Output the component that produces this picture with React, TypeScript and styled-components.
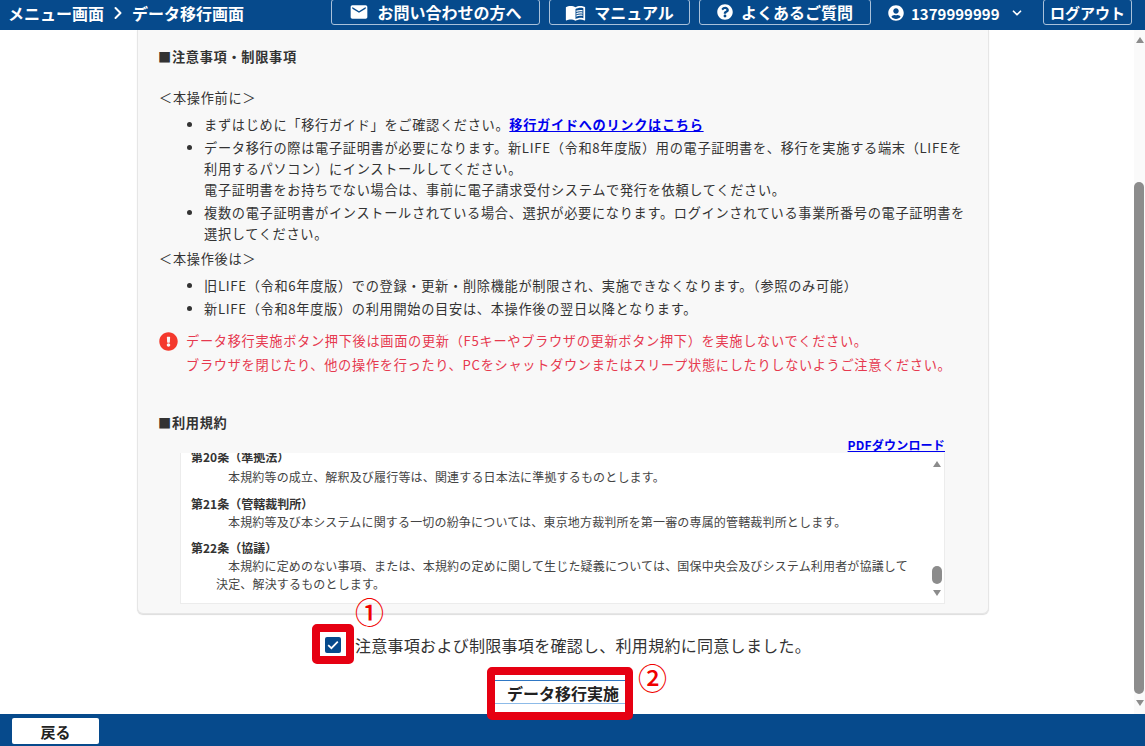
import React from "react";
import styled, { createGlobalStyle } from "styled-components";
import { MdEmail, MdMenuBook } from "react-icons/md";
import { FaQuestionCircle, FaUserCircle, FaExclamationCircle } from "react-icons/fa";
import { FiChevronDown, FiChevronRight } from "react-icons/fi";

const Global = createGlobalStyle`
  html, body { margin: 0; padding: 0; height: 100%; overflow: hidden; background: #fff; }
  #root { height: 100%; }
  body { font-family: "Noto Sans CJK JP", "Noto Sans", sans-serif; color: #333; }
`;

const Page = styled.div`
  height: 746px;
  display: flex;
  flex-direction: column;
`;

const Header = styled.header`
  height: 30px;
  flex: none;
  background: #064a8c;
  color: #fff;
  display: flex;
  align-items: flex-start;
  padding: 0 13px 0 8px;
  box-sizing: border-box;
`;

const Crumbs = styled.div`
  flex: 1;
  display: flex;
  align-items: center;
  gap: 4px;
  height: 26px;
  font-size: 16px;
  font-weight: 700;
  line-height: 26px;
`;

const HeaderButton = styled.a<{ $w: number; $mr: number; $fs: number }>`
  box-sizing: border-box;
  width: ${(p) => p.$w}px;
  margin-right: ${(p) => p.$mr}px;
  height: 26px;
  margin-top: -1px;
  border: 1px solid #a9c1da;
  border-radius: 3px;
  display: flex;
  align-items: center;
  justify-content: center;
  gap: 8px;
  font-size: ${(p) => p.$fs}px;
  font-weight: 700;
  color: #fff;
  svg { flex: none; }
`;

const UserMenu = styled.div`
  width: 136px;
  margin-right: 19px;
  height: 26px;
  display: flex;
  align-items: center;
  gap: 7px;
  font-size: 15px;
  font-weight: 700;
  svg:last-child { margin-left: 3px; }
`;

const Main = styled.main`
  flex: 1;
  min-height: 0;
  display: flex;
`;

const Content = styled.div`
  flex: 1;
  min-width: 0;
  padding: 0 145px 0 137px;
`;

const Panel = styled.section`
  box-sizing: border-box;
  height: 584px;
  background: #f8f8f8;
  border: 1px solid #e6e6e6;
  border-top: 0;
  border-radius: 0 0 6px 6px;
  box-shadow: 0 1px 1px #ddd;
  padding: 16px 0 0 21px;
  font-size: 13.2px;
  line-height: 21px;
  letter-spacing: 0.69px;
  color: #333;
`;

const Heading = styled.h2`
  margin: 0 0 0 -1px;
  font-size: 13.2px;
  line-height: 21px;
  font-weight: 700;
  color: #333;
`;

const Lead = styled.p<{ $top: number }>`
  margin: ${(p) => p.$top}px 0 0;
`;

const List = styled.ul`
  margin: 6px 0 0;
  padding: 0 0 0 45px;
`;

const Item = styled.li`
  margin-bottom: 2px;
  white-space: nowrap;
`;

const InlineLink = styled.a`
  color: #0000ee;
  font-weight: 700;
  text-decoration: underline;
`;

const Alert = styled.div`
  margin-top: 10px;
  display: flex;
  align-items: flex-start;
  gap: 8px;
  color: #e6394f;
  line-height: 24px;
  svg { flex: none; margin-top: 3px; color: #f4392d; }
`;

const TermsHeading = styled(Heading)`
  margin-top: 35px;
`;

const DownloadRow = styled.div`
  display: flex;
  justify-content: flex-end;
  padding-right: 43px;
  height: 19px;
  margin-top: 1px;
  line-height: 21px;
`;

const DownloadLink = styled.a`
  color: #0000ee;
  font-size: 12px;
  font-weight: 700;
  text-decoration: underline;
  letter-spacing: 0.2px;
`;

const TermsBox = styled.div`
  margin-left: 21px;
  width: 765px;
  height: 151px;
  box-sizing: border-box;
  background: #fff;
  border: 1px solid #ececec;
  border-top: 0;
  display: flex;
  overflow: hidden;
  letter-spacing: 0;
`;

const TermsBody = styled.div`
  flex: 1;
  min-width: 0;
  overflow: hidden;
  padding: 0 0 0 10px;
  font-size: 12px;
  line-height: 18px;
  color: #444;
`;

const ClauseTitle = styled.div`
  font-weight: 700;
  line-height: 19px;
  color: #333;
`;

const Clause = styled.div`
  margin-bottom: 7.5px;
  &:first-child { margin-top: -6px; }
  &:first-child ${ClauseTitle} { margin-bottom: 2px; }
`;

const ClauseText = styled.div`
  margin-left: 25px;
  padding-right: 10px;
  text-indent: 12px;
  letter-spacing: 0.17px;
`;

const ScrollTrack = styled.div<{ $w: number; $bg: string; $pad: number; $padBottom: number }>`
  flex: none;
  width: ${(p) => p.$w}px;
  background: ${(p) => p.$bg};
  box-sizing: border-box;
  padding: ${(p) => p.$pad}px 0 ${(p) => p.$padBottom}px;
  display: flex;
  flex-direction: column;
  align-items: flex-end;
`;

const ArrowUp = styled.div<{ $right: number }>`
  flex: none;
  width: 0;
  height: 0;
  margin-right: ${(p) => p.$right}px;
  border-left: 4px solid transparent;
  border-right: 4px solid transparent;
  border-bottom: 6px solid #8c8c8c;
`;

const ArrowDown = styled.div<{ $right: number }>`
  flex: none;
  width: 0;
  height: 0;
  margin-right: ${(p) => p.$right}px;
  border-left: 4px solid transparent;
  border-right: 4px solid transparent;
  border-top: 6px solid #8c8c8c;
`;

const Thumb = styled.div<{ $h: number; $top: number; $right: number; $w: number; $bottom: number }>`
  flex: none;
  width: ${(p) => p.$w}px;
  height: ${(p) => p.$h}px;
  margin: ${(p) => p.$top}px ${(p) => p.$right}px ${(p) => p.$bottom}px 0;
  background: #8c8c8c;
  border-radius: 5px;
`;

const AgreeRow = styled.div`
  display: flex;
  justify-content: center;
  align-items: center;
  gap: 14px;
  margin-top: 19px;
  height: 24px;
  padding-left: 10px;
  font-size: 16px;
  letter-spacing: 0.29px;
  color: #333;
`;

const CheckWrap = styled.span`
  position: relative;
  width: 16px;
  height: 16px;
  flex: none;
  background: #064a8c;
  border-radius: 2px;
  display: flex;
  align-items: center;
  justify-content: center;
`;

const RedFrame = styled.span<{ $t: number; $r: number; $b: number; $l: number; $bw: number }>`
  position: absolute;
  top: ${(p) => p.$t}px;
  right: ${(p) => p.$r}px;
  bottom: ${(p) => p.$b}px;
  left: ${(p) => p.$l}px;
  border: ${(p) => p.$bw}px solid #e60012;
  border-radius: 5px;
  pointer-events: none;
`;

const Circled = styled.span<{ $t: number; $l: number }>`
  position: absolute;
  top: ${(p) => p.$t}px;
  left: ${(p) => p.$l}px;
  color: #f00000;
  font-size: 29px;
  line-height: 30px;
  font-weight: 500;
  letter-spacing: 0;
  font-family: "Noto Sans CJK JP", sans-serif;
`;

const ActionRow = styled.div`
  display: flex;
  justify-content: center;
  margin-top: 23px;
`;

const ActionButton = styled.button`
  position: relative;
  width: 138px;
  height: 24px;
  box-sizing: border-box;
  padding: 0;
  background: #fff;
  border: 0;
  border-top: 1px solid #2f77c4;
  border-bottom: 1px solid #8dbbe8;
  font-family: inherit;
  font-size: 16px;
  line-height: 24px;
  font-weight: 700;
  color: #222;
`;

const Footer = styled.footer`
  height: 32px;
  flex: none;
  background: #064a8c;
  padding: 4px 0 0 12px;
  box-sizing: border-box;
`;

const BackButton = styled.button`
  width: 87px;
  height: 26px;
  padding: 0;
  border: 0;
  border-radius: 2px;
  background: #fff;
  font-family: inherit;
  font-size: 15px;
  font-weight: 700;
  color: #222;
`;

export default function App() {
  return (
    <Page>
      <Global />
      <Header>
        <Crumbs>
          <span>メニュー画面</span>
          <FiChevronRight size={20} strokeWidth={2.4} />
          <span>データ移行画面</span>
        </Crumbs>
        <HeaderButton $w={209} $mr={9} $fs={16}><MdEmail size={20} />お問い合わせの方へ</HeaderButton>
        <HeaderButton $w={141} $mr={9} $fs={16}><MdMenuBook size={21} />マニュアル</HeaderButton>
        <HeaderButton $w={172} $mr={17} $fs={16}><FaQuestionCircle size={16} />よくあるご質問</HeaderButton>
        <UserMenu><FaUserCircle size={16} />1379999999<FiChevronDown size={14} strokeWidth={3} /></UserMenu>
        <HeaderButton $w={89} $mr={0} $fs={15}>ログアウト</HeaderButton>
      </Header>
      <Main>
        <Content>
          <Panel>
            <Heading>■注意事項・制限事項</Heading>
            <Lead $top={20}>＜本操作前に＞</Lead>
            <List>
              <Item>まずはじめに「移行ガイド」をご確認ください。<InlineLink href="#">移行ガイドへのリンクはこちら</InlineLink></Item>
              <Item>データ移行の際は電子証明書が必要になります。新LIFE（令和8年度版）用の電子証明書を、移行を実施する端末（LIFEを<br />利用するパソコン）にインストールしてください。<br />電子証明書をお持ちでない場合は、事前に電子請求受付システムで発行を依頼してください。</Item>
              <Item>複数の電子証明書がインストールされている場合、選択が必要になります。ログインされている事業所番号の電子証明書を<br />選択してください。</Item>
            </List>
            <Lead $top={4}>＜本操作後は＞</Lead>
            <List>
              <Item>旧LIFE（令和6年度版）での登録・更新・削除機能が制限され、実施できなくなります。（参照のみ可能）</Item>
              <Item>新LIFE（令和8年度版）の利用開始の目安は、本操作後の翌日以降となります。</Item>
            </List>
            <Alert>
              <FaExclamationCircle size={19} />
              <div>
                データ移行実施ボタン押下後は画面の更新（F5キーやブラウザの更新ボタン押下）を実施しないでください。<br />
                ブラウザを閉じたり、他の操作を行ったり、PCをシャットダウンまたはスリープ状態にしたりしないようご注意ください。
              </div>
            </Alert>
            <TermsHeading>■利用規約</TermsHeading>
            <DownloadRow><DownloadLink href="#">PDFダウンロード</DownloadLink></DownloadRow>
            <TermsBox>
              <TermsBody>
                <Clause>
                  <ClauseTitle>第20条（準拠法）</ClauseTitle>
                  <ClauseText>本規約等の成立、解釈及び履行等は、関連する日本法に準拠するものとします。</ClauseText>
                </Clause>
                <Clause>
                  <ClauseTitle>第21条（管轄裁判所）</ClauseTitle>
                  <ClauseText>本規約等及び本システムに関する一切の紛争については、東京地方裁判所を第一審の専属的管轄裁判所とします。</ClauseText>
                </Clause>
                <Clause>
                  <ClauseTitle>第22条（協議）</ClauseTitle>
                  <ClauseText>本規約に定めのない事項、または、本規約の定めに関して生じた疑義については、国保中央会及びシステム利用者が協議して決定、解決するものとします。</ClauseText>
                </Clause>
              </TermsBody>
              <ScrollTrack $w={17} $bg="#fff" $pad={8} $padBottom={0}>
                <ArrowUp $right={3} />
                <Thumb $w={10} $h={18} $top={99} $bottom={6} $right={2} />
                <ArrowDown $right={3} />
              </ScrollTrack>
            </TermsBox>
          </Panel>
          <AgreeRow>
            <CheckWrap>
              <svg width="12" height="10" viewBox="0 0 12 10" fill="none">
                <path d="M1.2 5.2 4.4 8.2 10.8 1.6" stroke="#fff" strokeWidth="1.7" />
              </svg>
              <RedFrame $t={-13} $r={-13} $b={-11} $l={-13} $bw={8} />
              <Circled $t={-41} $l={30}>①</Circled>
            </CheckWrap>
            <span>注意事項および制限事項を確認し、利用規約に同意しました。</span>
          </AgreeRow>
          <ActionRow>
            <ActionButton>
              データ移行実施
              <RedFrame $t={-14} $r={-1} $b={-17} $l={-7} $bw={8} />
              <Circled $t={-19} $l={144}>②</Circled>
            </ActionButton>
          </ActionRow>
        </Content>
        <ScrollTrack $w={11} $bg="#fafafa" $pad={7} $padBottom={8}>
          <ArrowUp $right={1} />
          <Thumb $w={10} $h={512} $top={139} $bottom={6} $right={1} />
          <ArrowDown $right={1} />
        </ScrollTrack>
      </Main>
      <Footer><BackButton>戻る</BackButton></Footer>
    </Page>
  );
}
